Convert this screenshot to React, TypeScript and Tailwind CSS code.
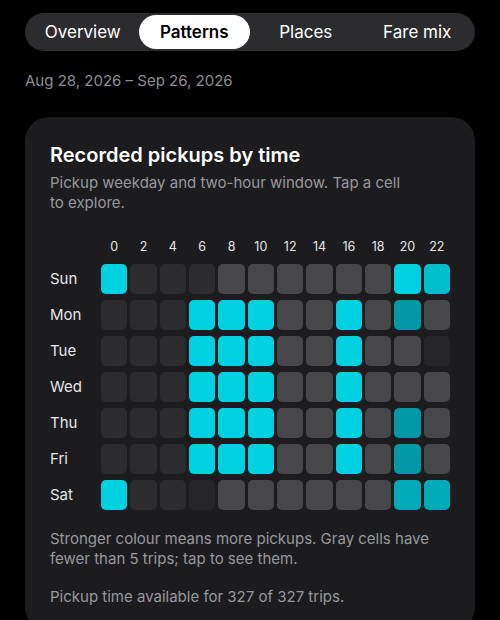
import { useState } from 'react'

const tabs = ['Overview', 'Patterns', 'Places', 'Fare mix']
const hours = [0, 2, 4, 6, 8, 10, 12, 14, 16, 18, 20, 22]

// B bright, M mid, T teal, S soft teal, G gray (<5 trips), K empty, X emptiest
const rows: { day: string; cells: string }[] = [
  { day: 'Sun', cells: 'BKKKGGGGGGBM' },
  { day: 'Mon', cells: 'KKKBBBGGBGTG' },
  { day: 'Tue', cells: 'KKKBBBGGBGGX' },
  { day: 'Wed', cells: 'KKKBBBGGBGGG' },
  { day: 'Thu', cells: 'KKKBBBGGBGTG' },
  { day: 'Fri', cells: 'KKKBBBGGBGTG' },
  { day: 'Sat', cells: 'BKKXGGGGGGSS' },
]

const cellClass: Record<string, string> = {
  B: 'bg-[#00d1e0]',
  M: 'bg-[#00bfcc]',
  T: 'bg-[#0099a5]',
  S: 'bg-[#00aab6]',
  G: 'bg-[#47474a]',
  K: 'bg-[#2c2c2e]',
  X: 'bg-[#262628]',
}

function Tabs() {
  const [active, setActive] = useState('Patterns')

  return (
    <div className="grid h-[38px] grid-cols-4 rounded-full bg-[#2c2c2e] p-[2px]">
      {tabs.map((tab) => (
        <button
          key={tab}
          onClick={() => setActive(tab)}
          className={
            tab === active
              ? 'rounded-full bg-white pt-[2px] text-[17px] font-semibold text-black'
              : 'rounded-full pt-[2px] text-[17px] text-white'
          }
        >
          {tab}
        </button>
      ))}
    </div>
  )
}

function Heatmap() {
  return (
    <div className="mt-[28px] grid grid-cols-[48px_repeat(12,minmax(0,1fr))] gap-x-[3px] gap-y-[6px]">
      <div />
      {hours.map((h) => (
        <div key={h} className="mb-[4px] text-center text-[12.5px] leading-[14px] text-[#e5e5e7]">
          {h}
        </div>
      ))}
      {rows.map((row) => (
        <div key={row.day} className="contents">
          <div className="flex h-[30px] items-center text-[15px] text-[#e5e5e7]">{row.day}</div>
          {row.cells.split('').map((c, i) => (
            <button
              key={i}
              aria-label={`${row.day} ${hours[i]}:00`}
              className={`h-[30px] rounded-[5px] ${cellClass[c]}`}
            />
          ))}
        </div>
      ))}
    </div>
  )
}

export default function App() {
  return (
    <div className="min-h-[620px] bg-black px-[25px] pt-[13px] font-['Inter','Noto_Sans',sans-serif] antialiased">
      <Tabs />

      <p className="mt-[20px] text-[15px] leading-[20px] text-[#8e8e93]">Aug 28, 2026 – Sep 26, 2026</p>

      <section className="mt-[26px] rounded-[24px] bg-[#1c1c1e] px-[25px] pb-[24px] pt-[26px]">
        <h2 className="text-[20px] font-semibold leading-[24px] text-white">Recorded pickups by time</h2>
        <p className="mt-[6px] max-w-[360px] text-[15px] leading-[19.5px] text-[#98989d]">
          Pickup weekday and two-hour window. Tap a cell to explore.
        </p>

        <Heatmap />

        <p className="mt-[19px] text-[15px] leading-[20px] text-[#98989d]">
          Stronger colour means more pickups. Gray cells have fewer than 5 trips; tap to see them.
        </p>
        <p className="mt-[18px] text-[15px] leading-[20px] text-[#98989d]">
          Pickup time available for 327 of 327 trips.
        </p>
      </section>
    </div>
  )
}
